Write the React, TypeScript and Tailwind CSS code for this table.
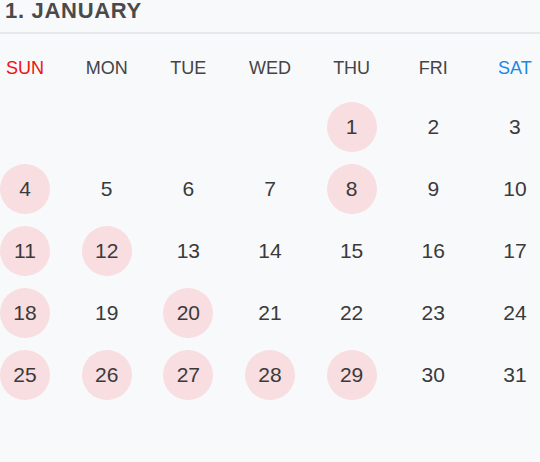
const days = ["SUN", "MON", "TUE", "WED", "THU", "FRI", "SAT"];

// days with a pink mark
const marked = [1, 4, 8, 11, 12, 18, 20, 25, 26, 27, 28, 29];

// January starts on Thursday
const offset = 4;
const total = 31;

export default function App() {
  const cells: (number | null)[] = [];
  for (let i = 0; i < offset; i++) cells.push(null);
  for (let d = 1; d <= total; d++) cells.push(d);
  while (cells.length % 7 !== 0) cells.push(null);

  const weeks: (number | null)[][] = [];
  for (let i = 0; i < cells.length; i += 7) weeks.push(cells.slice(i, i + 7));

  return (
    <div
      className="w-[540px] h-[462px] bg-[#f8f9fb] overflow-hidden"
      style={{ fontFamily: '"Liberation Sans", Arial, sans-serif' }}
    >
      <div className="h-[34px] border-b-2 border-[#e6e8eb] pl-[5px]">
        <h1 className="text-[22px] leading-[21px] font-bold tracking-[0.7px] text-[#4a4a4a]">
          1. JANUARY
        </h1>
      </div>

      <div className="flex justify-between h-[68px] items-center">
        {days.map((d, i) => (
          <div
            key={d}
            className={
              "w-[50px] text-center text-[18px] " +
              (i === 0 ? "text-[#ee1111]" : i === 6 ? "text-[#1a88e6]" : "text-[#444444]")
            }
          >
            {d}
          </div>
        ))}
      </div>

      <div className="flex flex-col gap-[12px]">
        {weeks.map((w, wi) => (
          <div key={wi} className="flex justify-between">
            {w.map((d, di) => (
              <div
                key={di}
                className={
                  "w-[50px] h-[50px] rounded-full flex items-center justify-center text-[21px] text-[#3a3a3a] " +
                  (d !== null && marked.includes(d) ? "bg-[#f8dde1]" : "")
                }
              >
                {d}
              </div>
            ))}
          </div>
        ))}
      </div>
    </div>
  );
}
